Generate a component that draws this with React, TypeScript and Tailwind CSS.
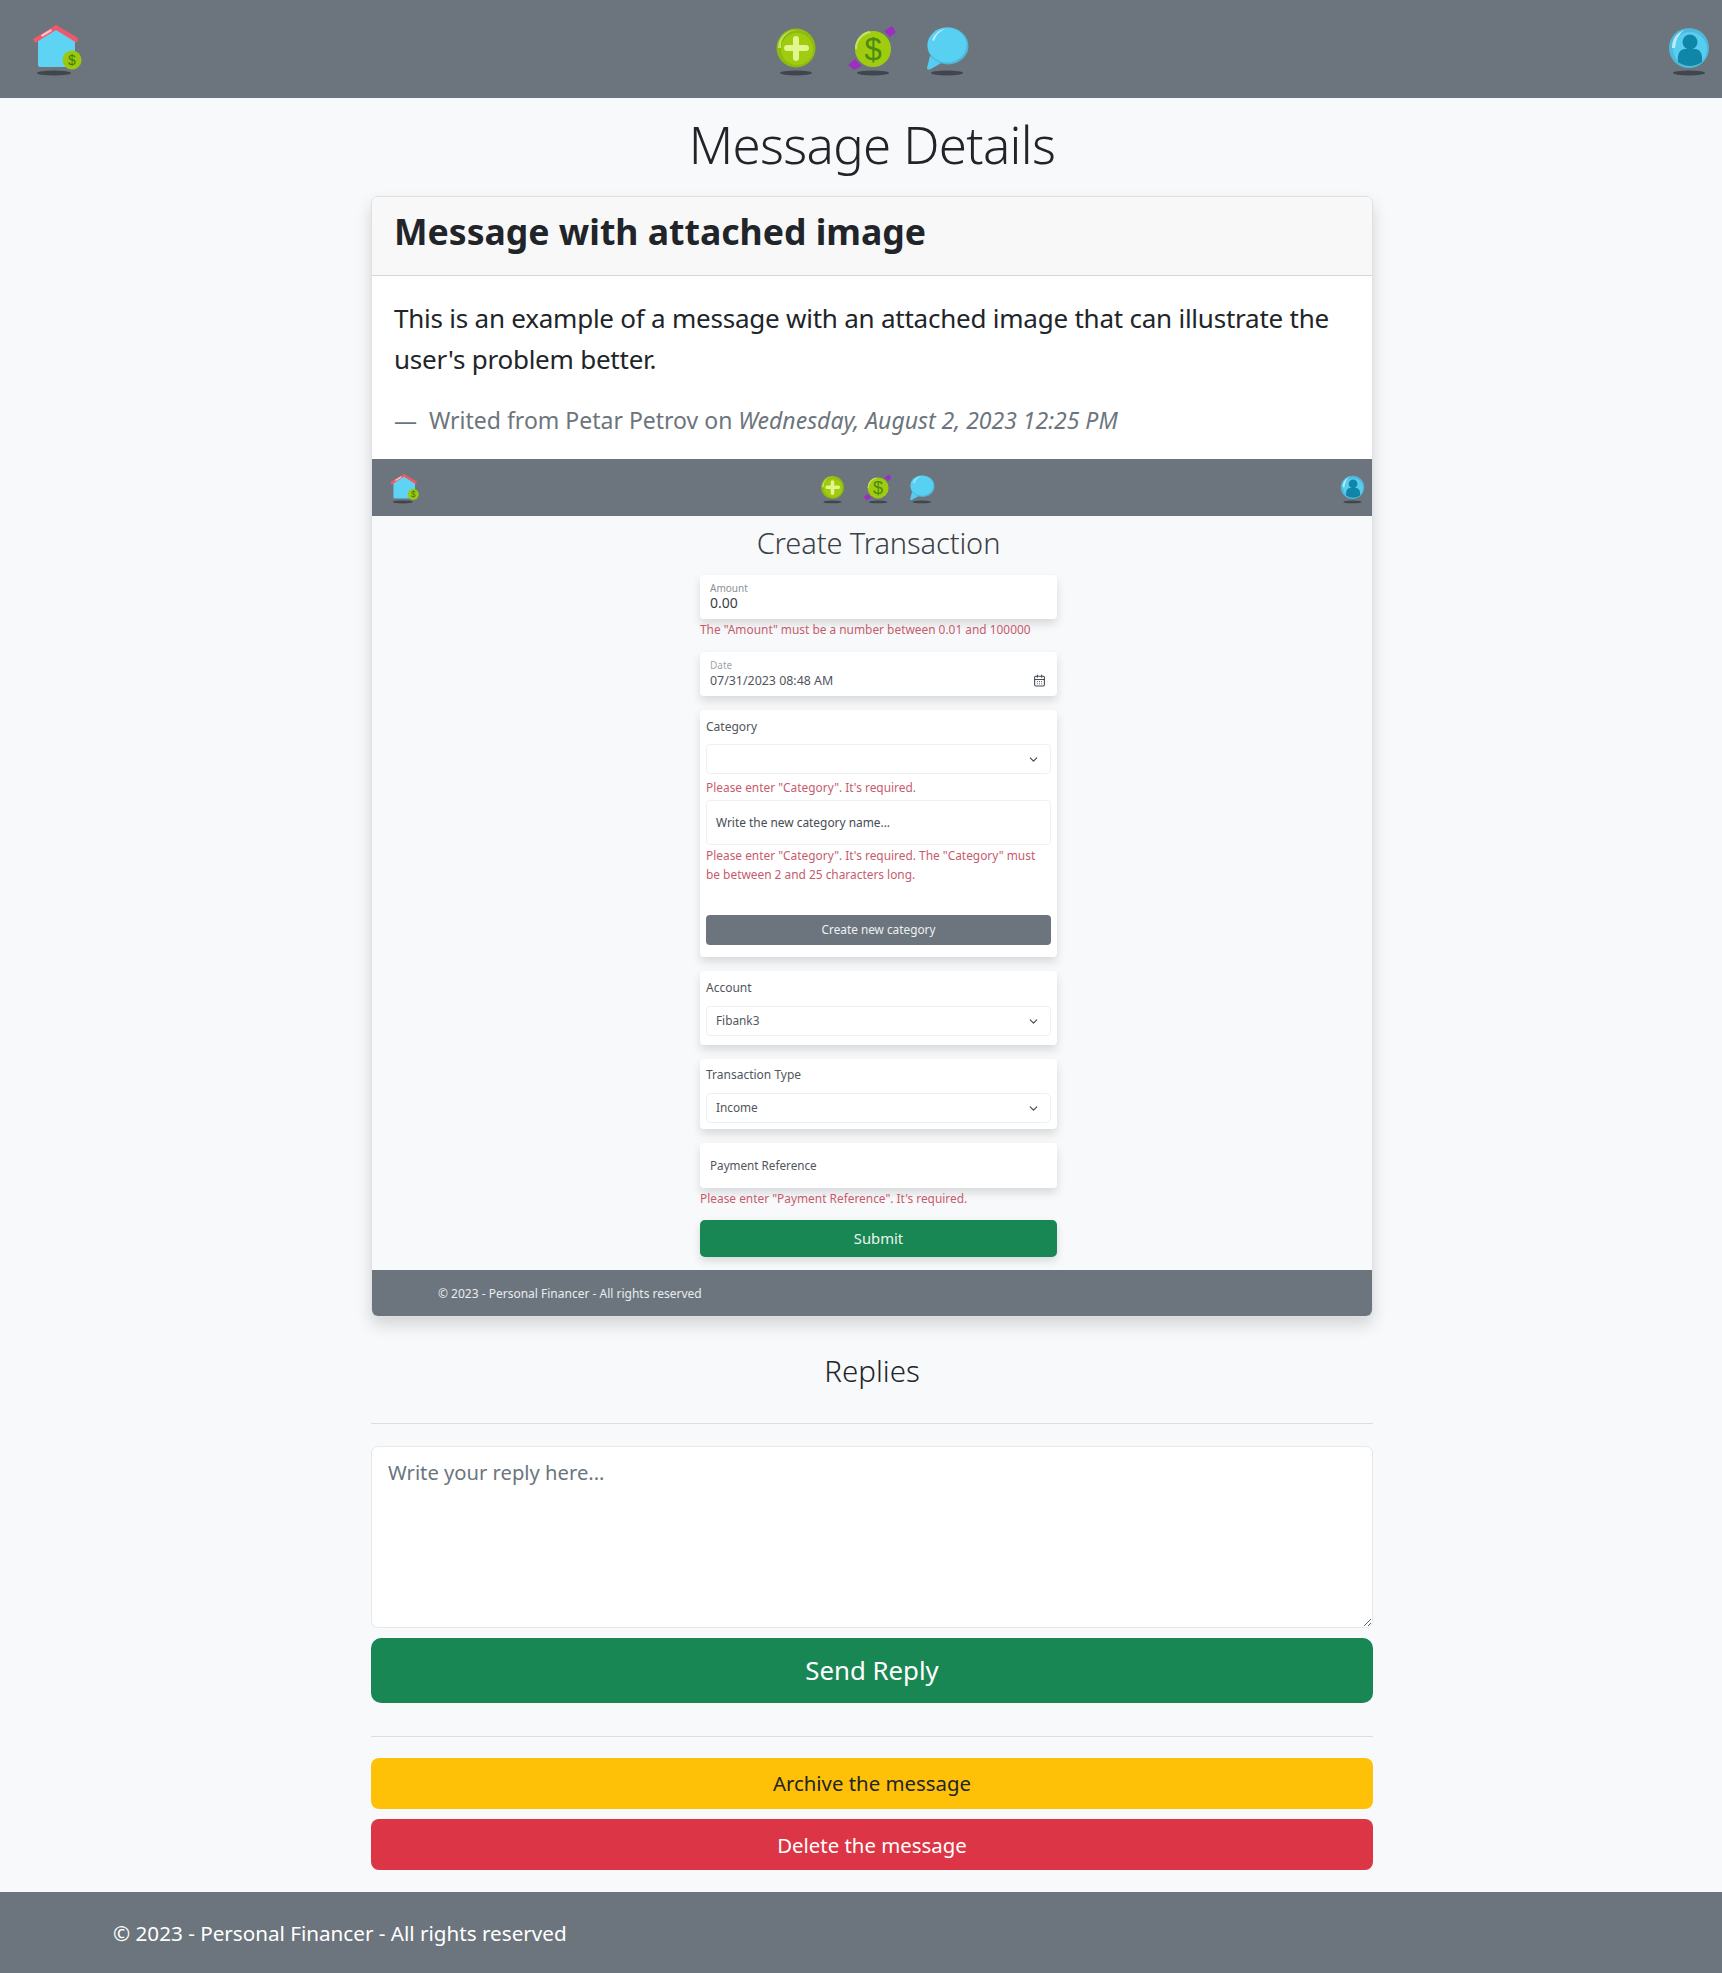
import { CalendarDays, ChevronDown } from "lucide-react";

const font = { fontFamily: '"Noto Sans", "Open Sans", sans-serif' };

function HomeIcon({ className }: { className: string }) {
  return (
    <svg viewBox="0 0 60 60" className={className}>
      <ellipse cx="27" cy="53" rx="17" ry="2.6" fill="#3f464d" />
      <path d="M11 20 L29 9 L48 19 L48 45 Q48 47 46 47 L13 47 Q11 47 11 45 Z" fill="#5fd3f3" />
      <path d="M6 19 L29 5 L51 18 L50 23 L29 10 L8 23 Z" fill="#ef5a6b" />
      <path d="M14 15 L24 9 L25 11 L15 17 Z" fill="#f6c3c8" />
      <circle cx="45" cy="40" r="9.5" fill="#9bc90d" />
      <text x="45" y="45" textAnchor="middle" fontSize="14" fontWeight="400" fill="#3e7a12" fontFamily="Liberation Sans, sans-serif">$</text>
    </svg>
  );
}

function PlusIcon({ className }: { className: string }) {
  return (
    <svg viewBox="0 0 60 60" className={className}>
      <ellipse cx="30" cy="53" rx="16" ry="2.4" fill="#3f464d" />
      <circle cx="30" cy="28" r="19.5" fill="#8fbc0c" />
      <path d="M12 28a18 18 0 0 1 18-18a18 18 0 0 1 14 7a16 16 0 0 0-29 11z" fill="#c4e26a" />
      <circle cx="31" cy="29" r="16" fill="#a0cc0f" />
      <path d="M30 19 v19 M21 28 h19" stroke="#e3f58f" strokeWidth="6" strokeLinecap="round" />
    </svg>
  );
}

function DollarIcon({ className }: { className: string }) {
  return (
    <svg viewBox="0 0 60 60" className={className}>
      <ellipse cx="31" cy="53" rx="16" ry="2.4" fill="#3f464d" />
      <path d="M6 45 L13 39 L20 46 L12 50 Z M42 11 L50 6 L54 12 L48 17 Z" fill="#9c2fc0" />
      <circle cx="31" cy="29" r="18" fill="#a0cc0f" />
      <path d="M15 29a16 16 0 0 1 14-16l-2 -2a18 18 0 0 0 -14 18z" fill="#c4e26a" />
      <text x="31" y="40" textAnchor="middle" fontSize="31" fontWeight="400" fill="#4c8a12" fontFamily="Liberation Sans, sans-serif">$</text>
    </svg>
  );
}

function BubbleIcon({ className }: { className: string }) {
  return (
    <svg viewBox="0 0 60 60" className={className}>
      <ellipse cx="29" cy="53" rx="16" ry="2.4" fill="#3f464d" />
      <path d="M12 36 L9 48 Q9 51 13 49 L25 42 Z" fill="#55cdf0" />
      <ellipse cx="30" cy="26" rx="20.5" ry="18.5" fill="#4fb7d8" />
      <ellipse cx="29" cy="25" rx="19.5" ry="17.5" fill="#57d0f2" />
      <path d="M14 20 Q18 10 27 9 Q19 12 16 21 Z" fill="#b9ecfa" />
    </svg>
  );
}

function UserIcon({ className }: { className: string }) {
  return (
    <svg viewBox="0 0 60 60" className={className}>
      <ellipse cx="30" cy="53" rx="16" ry="2.4" fill="#3f464d" />
      <circle cx="30" cy="28" r="20" fill="#4fb9da" />
      <circle cx="31" cy="29" r="17" fill="#58cdf0" />
      <circle cx="31" cy="22" r="7.5" fill="#0f86a8" />
      <path d="M19 42 Q18 30 25 29 L37 29 Q44 30 43 42 Q37 46 31 46 Q25 46 19 42 Z" fill="#0f86a8" />
      <path d="M13 28 Q13 15 25 10 Q17 16 16 28 Z" fill="#b9ecfa" />
    </svg>
  );
}

function FieldError({ children }: { children: React.ReactNode }) {
  return <div className="text-[11.9px] leading-[19px] text-[#c75b6d]">{children}</div>;
}

function FakeSelect({ value }: { value?: string }) {
  return (
    <div className="flex h-[30px] items-center justify-between rounded-[4px] border border-[#eef0f2] bg-white pl-[9px] pr-[10px] text-[11.8px] text-[#50565c]">
      <span>{value}</span>
      <ChevronDown size={13} strokeWidth={2.2} className="text-[#444b52]" />
    </div>
  );
}

function ShotCard({ className, children }: { className: string; children: React.ReactNode }) {
  return (
    <div className={`rounded-[4px] bg-white shadow-[0_5px_10px_rgba(0,0,0,0.13)] ${className}`}>{children}</div>
  );
}

// the attached screenshot inside the message card
function AttachedShot() {
  return (
    <div className="bg-[#f8f9fa]">
      <div className="flex h-[57px] items-start justify-between bg-[#6c757d] pt-[12px] pl-[15px] pr-[2px]">
        <HomeIcon className="h-[35px] w-[35px]" />
        <div className="ml-[-2px] flex gap-[10px]">
          <PlusIcon className="h-[35px] w-[35px]" />
          <DollarIcon className="h-[35px] w-[35px]" />
          <BubbleIcon className="h-[35px] w-[35px]" />
        </div>
        <UserIcon className="h-[35px] w-[35px]" />
      </div>
      <div className="ml-[328px] w-[357px] pb-[13px]">
        <h4 className="mt-[6px] mb-[11px] text-center text-[29px] tracking-[-0.1px] leading-[42px] font-light text-[#3a4046]">
          Create Transaction
        </h4>
        <ShotCard className="h-[44px] px-[10px] pt-[8px]">
          <div className="text-[10px] leading-[11px] text-[#8a9096]">Amount</div>
          <div className="text-[14px] leading-[18px] text-[#3a4046]">0.00</div>
        </ShotCard>
        <div className="mt-[1px] mb-[13px]">
          <FieldError>The "Amount" must be a number between 0.01 and 100000</FieldError>
        </div>
        <ShotCard className="relative h-[44px] px-[10px] pt-[8px]">
          <div className="mb-[1px] text-[10px] leading-[11px] text-[#a2a7ac]">Date</div>
          <div className="text-[12.4px] leading-[18px] text-[#50565c]">07/31/2023 08:48 AM</div>
          <CalendarDays size={13} className="absolute top-[22px] right-[11px] text-[#444b52]" />
        </ShotCard>
        <ShotCard className="mt-[14px] h-[247px] px-[6px] pt-[7px]">
          <div className="mb-[7px] text-[12px] leading-[20px] text-[#50565c]">Category</div>
          <FakeSelect />
          <div className="mt-[4px] mb-[3px]">
            <FieldError>Please enter "Category". It's required.</FieldError>
          </div>
          <div className="flex h-[45px] items-center rounded-[4px] border border-[#eef0f2] pl-[9px] text-[11.9px] text-[#444b52]">
            Write the new category name...
          </div>
          <div className="mt-[1px] mb-[31px]">
            <FieldError>Please enter "Category". It's required. The "Category" must be between 2 and 25 characters long.</FieldError>
          </div>
          <div className="flex h-[30px] items-center justify-center rounded-[4px] bg-[#6c757d] text-[11.8px] text-[#eef0f2]">
            Create new category
          </div>
        </ShotCard>
        <ShotCard className="mt-[14px] h-[74px] px-[6px] pt-[7px]">
          <div className="mb-[8px] text-[12px] leading-[20px] text-[#50565c]">Account</div>
          <FakeSelect value="Fibank3" />
        </ShotCard>
        <ShotCard className="mt-[14px] h-[70px] px-[6px] pt-[6px]">
          <div className="mb-[8px] text-[12px] leading-[20px] text-[#50565c]">Transaction Type</div>
          <FakeSelect value="Income" />
        </ShotCard>
        <ShotCard className="mt-[14px] flex h-[45px] items-center px-[10px] text-[11.7px] text-[#50565c]">
          Payment Reference
        </ShotCard>
        <div className="mt-[1px] mb-[12px]">
          <FieldError>Please enter "Payment Reference". It's required.</FieldError>
        </div>
        <div className="flex h-[37px] items-center justify-center rounded-[5px] bg-[#198754] text-[14.8px] text-[#e9f5ef] shadow-[0_4px_8px_rgba(0,0,0,0.13)]">
          Submit
        </div>
      </div>
      <div className="flex h-[46px] items-center bg-[#6c757d] pl-[66px] pt-[2px] text-[12px] text-[#e9ecef]">
        © 2023 - Personal Financer - All rights reserved
      </div>
    </div>
  );
}

export default function App() {
  return (
    <div style={font} className="flex min-h-[1973px] flex-col bg-[#f8f9fa] text-[#212529]">
      <nav className="flex h-[98px] items-start justify-between bg-[#6c757d] pt-[20px] pl-[27px] pr-[3px]">
        <HomeIcon className="h-[60px] w-[60px]" />
        <div className="ml-[-3px] flex gap-[16px]">
          <PlusIcon className="h-[60px] w-[60px]" />
          <DollarIcon className="h-[60px] w-[60px]" />
          <BubbleIcon className="h-[60px] w-[60px]" />
        </div>
        <UserIcon className="h-[60px] w-[60px]" />
      </nav>

      <main className="ml-[371px] w-[1002px]">
        <h1 className="mt-[13px] mb-[18px] text-center text-[51px] tracking-[-0.67px] leading-[67px] font-light">
          Message Details
        </h1>

        <div className="overflow-hidden rounded-[7px] border border-[#dfe0e1] bg-white shadow-[0_8px_16px_rgba(0,0,0,0.15)]">
          <div className="flex h-[79px] items-center border-b border-[#d5d6d7] bg-[#f8f8f8] px-[22px] pb-[10px]">
            <h3 className="text-[35.6px] leading-[44px] font-bold">Message with attached image</h3>
          </div>
          <div className="h-[183px] px-[22px] pt-[22px]">
            <p className="text-[26px] tracking-[-0.23px] leading-[41px]">
              This is an example of a message with an attached image that can illustrate the user's problem better.
            </p>
            <p className="mt-[20px] text-[23px] leading-[40px] text-[#6c757d]">
              — &nbsp;Writed from Petar Petrov on <i>Wednesday, August 2, 2023 12:25 PM</i>
            </p>
          </div>
          <AttachedShot />
        </div>

        <h3 className="mt-[33px] mb-[31px] text-center text-[29.5px] leading-[42px] font-light">Replies</h3>
        <hr className="border-[#dcdddf]" />
        <textarea
          placeholder="Write your reply here..."
          className="mt-[22px] block h-[182px] w-full rounded-[7px] border border-[#e6e7e9] bg-white px-[16px] py-[10px] text-[20.2px] leading-[30px] placeholder:text-[#6c757d]"
        />
        <button className="mt-[10px] block h-[65px] w-full rounded-[10px] bg-[#198754] text-[25.8px] text-white">
          Send Reply
        </button>
        <hr className="mt-[33px] border-[#dcdddf]" />
        <button className="mt-[21px] block h-[51px] w-full rounded-[8px] bg-[#ffc107] text-[20.4px] text-[#212529]">
          Archive the message
        </button>
        <button className="mt-[10px] block h-[51px] w-full rounded-[8px] bg-[#dc3545] pt-[1px] text-[20.4px] text-white">
          Delete the message
        </button>
      </main>

      <footer className="mt-[22px] flex h-[81px] items-center bg-[#6c757d] pl-[113px] pt-[1px] text-[20.65px] text-white">
        © 2023 - Personal Financer - All rights reserved
      </footer>
    </div>
  );
}
